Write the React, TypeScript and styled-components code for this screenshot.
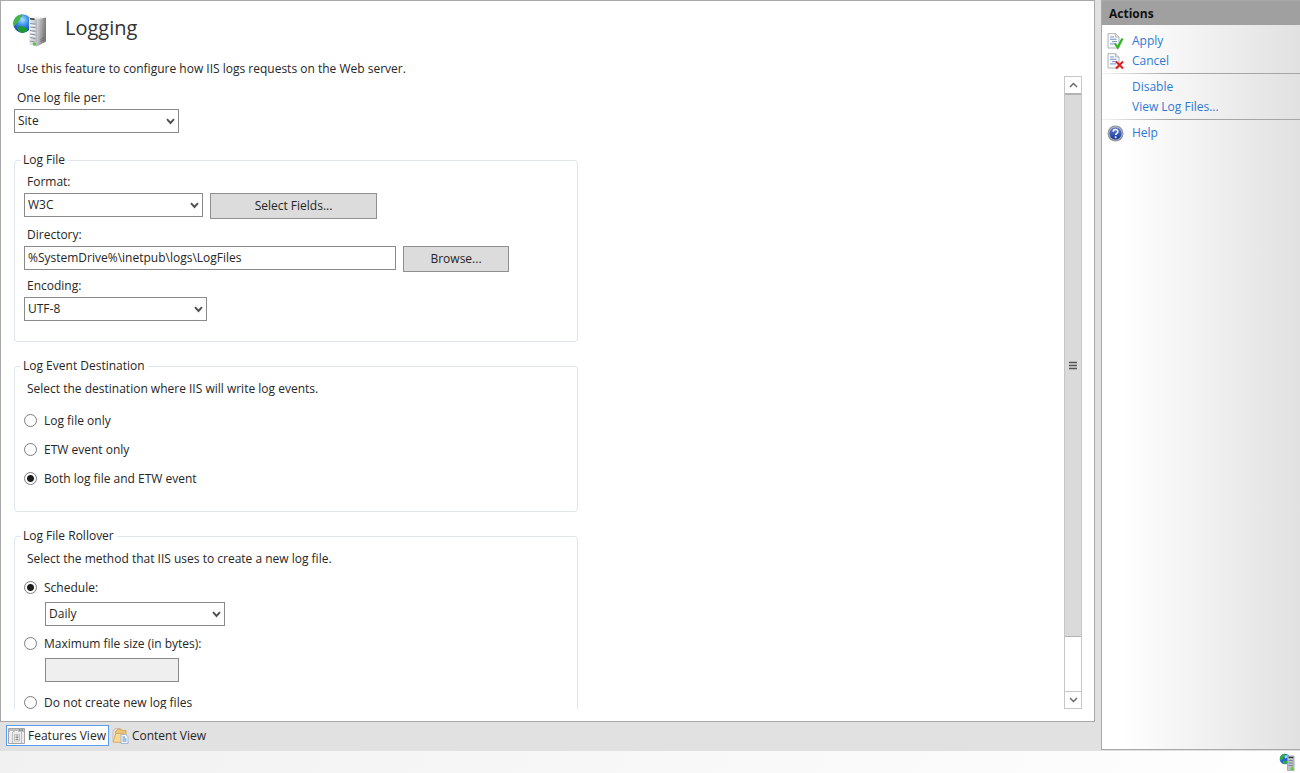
import React, { useState } from "react";
import styled, { createGlobalStyle } from "styled-components";

const GlobalStyle = createGlobalStyle`
  *, *::before, *::after { box-sizing: border-box; }
  body {
    margin: 0;
    background: #e1e1e1;
    color: #262626;
    font: 12px/16px "Open Sans", "Noto Sans", sans-serif;
  }
  button, input, select { font: inherit; color: inherit; }
`;

const Window = styled.div`
  display: flex;
  flex-direction: column;
  height: 100vh;
`;

const Workspace = styled.div`
  flex: 1;
  min-height: 0;
  display: flex;
  gap: 6px;
`;

const Center = styled.main`
  flex: 1;
  min-width: 0;
  display: flex;
  flex-direction: column;
`;

const Page = styled.section`
  flex: 1;
  min-height: 0;
  display: flex;
  flex-direction: column;
  padding: 12px;
  background: #fff;
  border: 1px solid #a9a9a9;
`;

const PageHeader = styled.header`
  display: flex;
  align-items: center;
  gap: 17px;
  height: 36px;
`;

const Title = styled.h1`
  margin: 0;
  padding-bottom: 6px;
  font-size: 20px;
  line-height: 28px;
  font-weight: 400;
  color: #333;
`;

const Intro = styled.p`
  margin: 12px 0 0;
  padding-left: 4px;
  line-height: 15px;
`;

const ScrollArea = styled.div`
  flex: 1;
  min-height: 0;
  display: flex;
`;

const Form = styled.form`
  flex: 1;
  min-width: 0;
  overflow: hidden;
  display: flex;
  flex-direction: column;
  gap: 16px;
  padding: 14px 12px 0 1px;
`;

const SiteField = styled.div`
  padding-bottom: 3px;
`;

const Group = styled.fieldset<{ $bottom: number }>`
  width: 100%;
  max-width: 564px;
  margin: 0;
  padding: 0 9px ${(p) => p.$bottom}px;
  border: 1px solid #dfe6ed;
  border-radius: 3px;
`;

const Legend = styled.legend`
  margin-left: -3px;
  padding: 0 3px 0 2px;
`;

const FieldLabel = styled.label<{ $top?: number }>`
  display: block;
  width: fit-content;
  margin: ${(p) => p.$top ?? 0}px 0 3px 3px;
`;

const Note = styled.p<{ $bottom: number }>`
  margin: 7px 0 ${(p) => p.$bottom}px 3px;
`;

const Row = styled.div`
  display: flex;
  align-items: flex-start;
  gap: 7px;
`;

const SelectBox = styled.div<{ $width: number }>`
  display: grid;
  align-items: center;
  width: ${(p) => p.$width}px;
  & > * { grid-area: 1 / 1; }
  & > svg { justify-self: end; margin-right: 4px; pointer-events: none; }
`;

const SelectControl = styled.select`
  appearance: none;
  width: 100%;
  height: 24px;
  padding: 0 20px 0 3px;
  background: #fff;
  border: 1px solid #8a8a8a;
  border-radius: 0;
`;

const TextBox = styled.input<{ $width: number }>`
  width: ${(p) => p.$width}px;
  height: 24px;
  padding: 0 3px 2px;
  background: #fff;
  border: 1px solid #8a8a8a;
  border-radius: 0;
  &:disabled { background: #efefef; }
`;

const PushButton = styled.button<{ $width: number }>`
  width: ${(p) => p.$width}px;
  height: 26px;
  padding: 0;
  background: #dcdcdc;
  border: 1px solid #8f8f8f;
`;

const RadioList = styled.div`
  display: flex;
  flex-direction: column;
  gap: 13px;
`;

const RadioLabel = styled.label`
  display: flex;
  align-items: flex-start;
  gap: 7px;
  width: fit-content;
`;

const RadioInput = styled.input`
  appearance: none;
  width: 13px;
  height: 13px;
  margin: 1px 0 0;
  border: 1px solid #7c7c7c;
  border-radius: 50%;
  background: #fff;
  &:checked { background: radial-gradient(circle, #1c1c1c 3px, #fff 4px); }
`;

const Nested = styled.div<{ $bottom: number }>`
  margin: 6px 0 ${(p) => p.$bottom}px 21px;
`;

const ScrollBar = styled.div`
  display: flex;
  flex-direction: column;
  width: 18px;
  background: #fff;
  border: 1px solid #c6c6c6;
`;

const ScrollButton = styled.button`
  display: flex;
  align-items: center;
  justify-content: center;
  height: 16px;
  padding: 0;
  border: 0;
  background: #fff;
`;

const Track = styled.div`
  flex: 1;
  display: flex;
  flex-direction: column;
  border-bottom: 1px solid #c6c6c6;
`;

const Thumb = styled.div`
  height: 91%;
  display: flex;
  align-items: center;
  justify-content: center;
  background: #dadada;
  border-top: 2px solid #b2b2b2;
  border-bottom: 1px solid #b2b2b2;
`;

const ViewTabs = styled.nav`
  display: flex;
  align-items: center;
  gap: 1px;
  height: 29px;
  padding: 0 6px 2px;
`;

const ViewTab = styled.button<{ $active?: boolean }>`
  display: flex;
  align-items: center;
  gap: 3px;
  height: 21px;
  padding: 0 2px 0 1px;
  background: ${(p) => (p.$active ? "#fff" : "transparent")};
  border: 1px solid ${(p) => (p.$active ? "#5a9ff5" : "transparent")};
`;

const Actions = styled.aside`
  width: 199px;
  display: flex;
  flex-direction: column;
  margin-bottom: 1px;
  border: solid #a9a9a9;
  border-width: 1px 0 1px 1px;
  background: linear-gradient(to right, #fff 10%, #e1e1e1);
`;

const ActionsTitle = styled.h2`
  margin: 0 0 6px;
  padding: 5px 7px 3px;
  font-size: 12px;
  line-height: 16px;
  font-weight: 700;
  color: #111;
  background: #a0a0a0;
`;

const ActionList = styled.ul`
  list-style: none;
  margin: 0;
  padding: 0;
`;

const ActionItem = styled.li`
  display: grid;
  grid-template-columns: 16px 1fr;
  align-items: center;
  column-gap: 9px;
  height: 20px;
  padding-left: 5px;
`;

const ActionLink = styled.a`
  grid-column: 2;
  justify-self: start;
  color: #2f7ad6;
  text-decoration: none;
`;

const Divider = styled.hr`
  height: 1px;
  margin: 2px 0 3px;
  border: 0;
  background: linear-gradient(to right, #f4f4f4, #a6a6a6 35%);
`;

const StatusBar = styled.footer`
  display: flex;
  align-items: center;
  justify-content: flex-end;
  height: 22px;
  padding-right: 4px;
  background: linear-gradient(to right, #f1f1f1, #fefefe);
`;

function Chevron({ up = false }: { up?: boolean }) {
  return (
    <svg width="9" height="6" viewBox="0 0 9 6" aria-hidden="true">
      <path d={up ? "M1 5 4.5 1.5 8 5" : "M1 1 4.5 4.5 8 1"} fill="none" stroke="#666" strokeWidth="1.4" />
    </svg>
  );
}

function DropChevron() {
  return (
    <svg width="9" height="7" viewBox="0 0 9 7" aria-hidden="true">
      <path d="M1 1.2 4.5 5 8 1.2" fill="none" stroke="#505050" strokeWidth="1.9" />
    </svg>
  );
}

function ServerIcon() {
  return (
    <svg width="35" height="36" viewBox="0 0 35 36" aria-hidden="true">
      <defs>
        <radialGradient id="globe" cx="50%" cy="30%" r="72%">
          <stop offset="0" stopColor="#a6e6ff" />
          <stop offset=".4" stopColor="#4594ea" />
          <stop offset="1" stopColor="#0d35a8" />
        </radialGradient>
        <linearGradient id="side" x1="0" x2="1" y1="0" y2=".3">
          <stop offset="0" stopColor="#dadada" />
          <stop offset="1" stopColor="#777" />
        </linearGradient>
        <linearGradient id="front" x1="0" x2="1">
          <stop offset="0" stopColor="#eef1f4" />
          <stop offset="1" stopColor="#b4bac2" />
        </linearGradient>
      </defs>
      <circle cx="9.5" cy="10.500" r="9.300" fill="url(#globe)" />
      <path d="M1 8C2 4 5 2 9 1.500c1 1.500-1 2.500-2 3.500 0 2-1 3-2.500 3.500C4 10 3 12 1 13 .2 11 .4 9.500 1 8Z" fill="#43b83c" />
      <path d="M4 14.500c3-2 6-1.500 8 0l3 2c-2 3-5 4-8 3-1.500-1-2.500-3-3-5Z" fill="#1e9a32" />
      <path d="m16 5 5-1.200 12 .6-8.500 1.800Z" fill="#ededed" />
      <path d="m16 5 8 1.200V33.500L16 31.500Z" fill="url(#front)" />
      <path d="m24 6.200 9-1.800v24l-9 5.100Z" fill="url(#side)" />
      <path d="m17 5.700 4.500.6" stroke="#333" strokeWidth="1.600" />
      <path d="m17 10.500 5.500.7M17 14l5.500.8M17 17.500l5.500.9M17 21l5.500 1M17 24.500l5.500 1.100M17 28l4.500 1" stroke="#8791a0" strokeWidth="1" />
      <path d="m17 12 5.500.7M17 15.500l5.500.8M17 19l5.500 1M17 22.500l5.500 1" stroke="#fff" strokeWidth=".9" />
      <path d="m27.500 26.500 3.500-2M27.500 28.500l3.500-2" stroke="#666" strokeWidth=".8" />
      <circle cx="21.500" cy="31" r="1.600" fill="#4ecb1e" />
    </svg>
  );
}

function ConnectionIcon() {
  return (
    <svg width="17" height="18" viewBox="0 0 17 18" aria-hidden="true">
      <circle cx="6" cy="6" r="5.300" fill="#2468c9" />
      <path d="M1.500 3.500C3 1 5 .7 6.500.8 6 2.500 5 3 4.500 5L2 7.500C.7 6.500.9 5 1.500 3.500ZM4 8h4l1 1.500C7.500 11 5.500 11.500 4 10.500Z" fill="#2fae3a" />
      <path d="M5.500 2.500 9 2.200l-.5 2.600-2.500.5Z" fill="#9be4ff" />
      <path d="M8.500 3H15v14.500H8.500Z" fill="#bcc2c9" stroke="#989ea4" strokeWidth=".8" />
      <path d="M9.500 4.500h4.800" stroke="#333" strokeWidth="1.300" />
      <path d="M9.500 7.500h4.500M9.500 10h4.500M9.500 12.500h4.500" stroke="#7b828a" strokeWidth=".9" />
      <circle cx="13" cy="15.500" r="1.500" fill="#5bd21c" />
    </svg>
  );
}

function DocumentShape() {
  return (
    <>
      <path d="M1 .7h7.500L12 4v11H1Z" fill="#f9fbfd" stroke="#a5a9ad" strokeWidth=".9" />
      <path d="M8.500.7V4H12" fill="#e3e6e9" stroke="#a5a9ad" strokeWidth=".8" />
      <path d="M3 4h4M3 6.300h6.500M5 8.600h5M3 10.900h6" stroke="#7396c6" strokeWidth="1" />
    </>
  );
}

function ApplyIcon() {
  return (
    <svg width="17" height="17" viewBox="0 0 17 17" aria-hidden="true">
      <DocumentShape />
      <path d="M8 10.500 10.700 14.500 15.500 5.500" fill="none" stroke="#2fb51e" strokeWidth="2.200" />
    </svg>
  );
}

function CancelIcon() {
  return (
    <svg width="17" height="17" viewBox="0 0 17 17" aria-hidden="true">
      <DocumentShape />
      <path d="m9 8.500 7 7M16 8.500l-7 7" stroke="#d8201c" strokeWidth="2" />
    </svg>
  );
}

function HelpIcon() {
  return (
    <svg width="17" height="17" viewBox="0 0 17 17" aria-hidden="true">
      <defs>
        <linearGradient id="help" x1="0" y1="0" x2="0" y2="1">
          <stop offset="0" stopColor="#6685cf" />
          <stop offset="1" stopColor="#12329b" />
        </linearGradient>
      </defs>
      <circle cx="8.500" cy="8.500" r="8" fill="#8e9299" />
      <circle cx="8.500" cy="8.500" r="6.500" fill="url(#help)" stroke="#c9cdd6" strokeWidth=".7" />
      <path d="M6.200 6.800c0-3 4.700-3 4.700-.2 0 1.700-2.200 1.700-2.200 3.400" fill="none" stroke="#fff" strokeWidth="1.500" />
      <circle cx="8.600" cy="12.200" r="1" fill="#fff" />
    </svg>
  );
}

function FeaturesIcon() {
  return (
    <svg width="17" height="16" viewBox="0 0 17 16" aria-hidden="true">
      <path d="M.5.500h16v15H.5Z" fill="#ececec" stroke="#a4a4a4" />
      <path d="M1 1h15v3H1Z" fill="#bdbdbd" />
      <path d="M11 2h1.500M13.500 2H15" stroke="#666" />
      <path d="M2 3.500h3M7 3.500h3" stroke="#fff" />
      <path d="M4.500 4v11M13.500 4v11" stroke="#bdbdbd" />
      <path d="M6.500 6.500h5v6.500h-5Z" fill="#fff" stroke="#aaa" strokeWidth=".7" />
      <path d="M7.500 8h3M7.500 9.700h3M7.500 11.400h3" stroke="#777" />
    </svg>
  );
}

function ContentIcon() {
  return (
    <svg width="17" height="16" viewBox="0 0 17 16" aria-hidden="true">
      <path d="m1 3 2-2.500h5L7 14H1Z" fill="#e4e4e4" stroke="#b6b6b6" strokeWidth=".7" />
      <path d="M3.500 3.500 6 1h3l1 1.500h4V12l-11 1.500Z" fill="#edc374" stroke="#c89a4c" strokeWidth=".7" />
      <path d="m1 14 3-8.500h7.500L9 14.500Z" fill="#f7d894" stroke="#cfa35a" strokeWidth=".7" />
      <path d="M9 6.500h4.500l2.500 2V15.500H9Z" fill="#f3f8fe" stroke="#8eacd0" strokeWidth=".8" />
      <path d="M10.500 9h2.500M10.500 11h4M10.500 13h4" stroke="#4c86cc" />
    </svg>
  );
}

type DropDownProps = { id: string; width: number; options: string[]; label?: string };

function DropDown({ id, width, options, label }: DropDownProps) {
  return (
    <SelectBox $width={width}>
      <SelectControl id={id} aria-label={label}>
        {options.map((o) => (
          <option key={o}>{o}</option>
        ))}
      </SelectControl>
      <DropChevron />
    </SelectBox>
  );
}

type RadioProps = { name: string; text: string; value: string; onPick: (v: string) => void };

function Radio({ name, text, value, onPick }: RadioProps) {
  return (
    <RadioLabel>
      <RadioInput type="radio" name={name} checked={value === text} onChange={() => onPick(text)} />
      {text}
    </RadioLabel>
  );
}

export default function App() {
  const [target, setTarget] = useState("Both log file and ETW event");
  const [rollover, setRollover] = useState("Schedule:");
  const sizeOption = "Maximum file size (in bytes):";

  return (
    <>
      <GlobalStyle />
      <Window>
        <Workspace>
          <Center>
            <Page>
              <PageHeader>
                <ServerIcon />
                <Title>Logging</Title>
              </PageHeader>
              <Intro>Use this feature to configure how IIS logs requests on the Web server.</Intro>
              <ScrollArea>
                <Form>
                  <SiteField>
                    <FieldLabel htmlFor="per">One log file per:</FieldLabel>
                    <DropDown id="per" width={165} options={["Site"]} />
                  </SiteField>

                  <Group $bottom={20}>
                    <Legend>Log File</Legend>
                    <FieldLabel htmlFor="format" $top={6}>Format:</FieldLabel>
                    <Row>
                      <DropDown id="format" width={179} options={["W3C"]} />
                      <PushButton type="button" $width={167}>Select Fields...</PushButton>
                    </Row>
                    <FieldLabel htmlFor="directory" $top={8}>Directory:</FieldLabel>
                    <Row>
                      <TextBox id="directory" $width={372} defaultValue="%SystemDrive%\inetpub\logs\LogFiles" />
                      <PushButton type="button" $width={106}>Browse...</PushButton>
                    </Row>
                    <FieldLabel htmlFor="encoding" $top={6}>Encoding:</FieldLabel>
                    <DropDown id="encoding" width={183} options={["UTF-8"]} />
                  </Group>

                  <Group $bottom={24}>
                    <Legend>Log Event Destination</Legend>
                    <Note $bottom={16}>Select the destination where IIS will write log events.</Note>
                    <RadioList>
                      {["Log file only", "ETW event only", "Both log file and ETW event"].map((t) => (
                        <Radio key={t} name="target" text={t} value={target} onPick={setTarget} />
                      ))}
                    </RadioList>
                  </Group>

                  <Group $bottom={24}>
                    <Legend>Log File Rollover</Legend>
                    <Note $bottom={13}>Select the method that IIS uses to create a new log file.</Note>
                    <Radio name="rollover" text="Schedule:" value={rollover} onPick={setRollover} />
                    <Nested $bottom={10}>
                      <DropDown id="schedule" width={180} options={["Daily"]} label="Schedule" />
                    </Nested>
                    <Radio name="rollover" text={sizeOption} value={rollover} onPick={setRollover} />
                    <Nested $bottom={13}>
                      <TextBox $width={134} aria-label="Maximum file size" disabled={rollover !== sizeOption} />
                    </Nested>
                    <Radio name="rollover" text="Do not create new log files" value={rollover} onPick={setRollover} />
                  </Group>
                </Form>
                <ScrollBar>
                  <ScrollButton type="button" aria-label="Scroll up"><Chevron up /></ScrollButton>
                  <Track>
                    <Thumb>
                      <svg width="8" height="9" viewBox="0 0 8 9" aria-hidden="true">
                        <path d="M0 1.500h8M0 4.500h8M0 7.500h8" stroke="#555" strokeWidth="1.300" />
                      </svg>
                    </Thumb>
                  </Track>
                  <ScrollButton type="button" aria-label="Scroll down"><Chevron /></ScrollButton>
                </ScrollBar>
              </ScrollArea>
            </Page>
            <ViewTabs>
              <ViewTab type="button" $active><FeaturesIcon />Features View</ViewTab>
              <ViewTab type="button"><ContentIcon />Content View</ViewTab>
            </ViewTabs>
          </Center>

          <Actions>
            <ActionsTitle>Actions</ActionsTitle>
            <ActionList>
              <ActionItem><ApplyIcon /><ActionLink href="#apply">Apply</ActionLink></ActionItem>
              <ActionItem><CancelIcon /><ActionLink href="#cancel">Cancel</ActionLink></ActionItem>
            </ActionList>
            <Divider />
            <ActionList>
              <ActionItem><ActionLink href="#disable">Disable</ActionLink></ActionItem>
              <ActionItem><ActionLink href="#view">View Log Files...</ActionLink></ActionItem>
            </ActionList>
            <Divider />
            <ActionList>
              <ActionItem><HelpIcon /><ActionLink href="#help">Help</ActionLink></ActionItem>
            </ActionList>
          </Actions>
        </Workspace>
        <StatusBar><ConnectionIcon /></StatusBar>
      </Window>
    </>
  );
}
